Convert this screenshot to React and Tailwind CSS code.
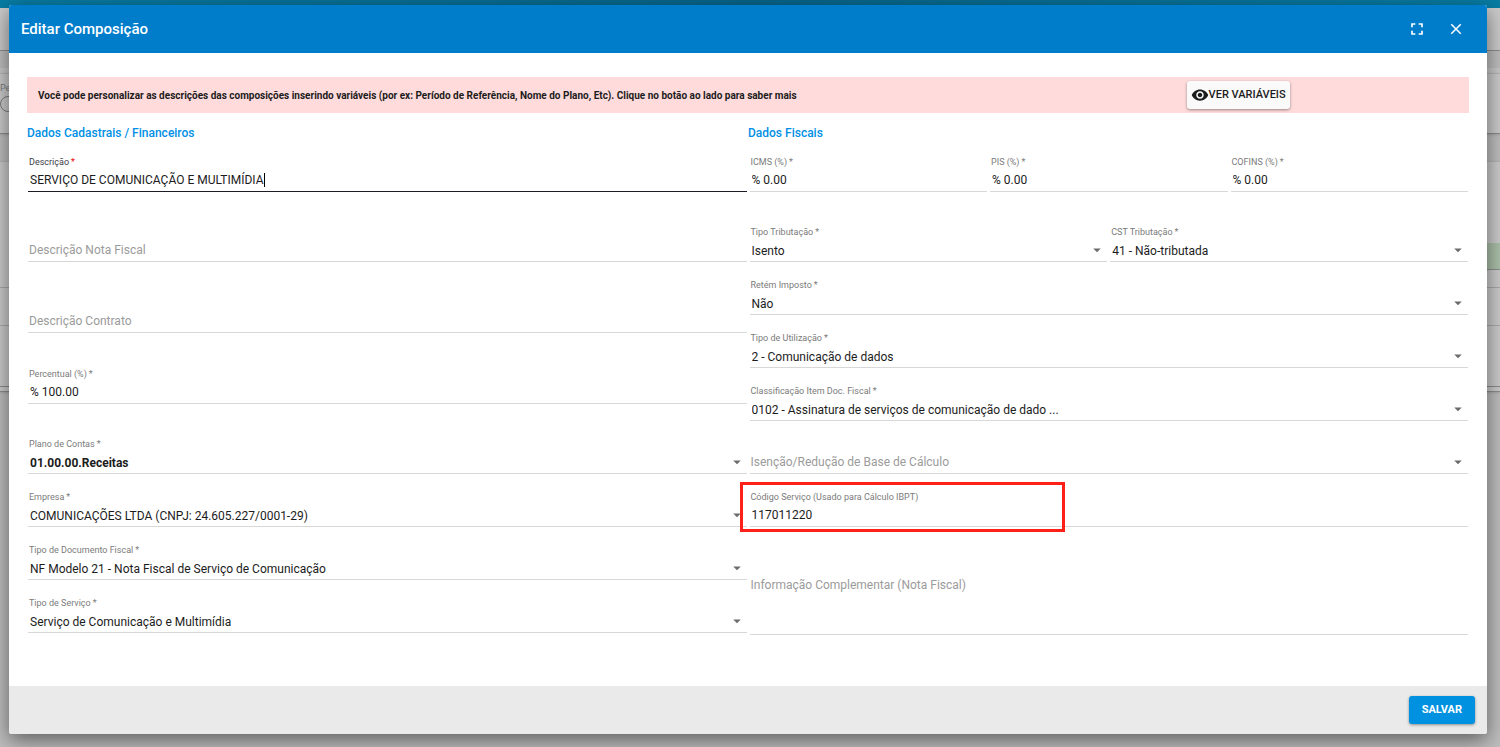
import React from 'react';
import { MdArrowDropDown, MdClose, MdFullscreen, MdVisibility } from 'react-icons/md';

const Label = ({ id, children, required, focused }) => (
  <label
    htmlFor={id}
    className={`mb-px block h-3 truncate pl-px text-[9px] leading-3 ${focused ? 'text-[#3c3c46]' : 'text-[#7b7b7b]'}`}
  >
    {children}
    {required && <span className={`ml-[2px] ${focused ? 'text-[#f00000]' : ''}`}>*</span>}
  </label>
);

// Label resting inside an empty control
const RestingLabel = ({ id, children }) => (
  <label
    htmlFor={id}
    className="pointer-events-none absolute left-px top-[13px] text-[12px] leading-[22px] text-[#9b9b9b]"
  >
    {children}
  </label>
);

const controlClass =
  'block h-[23px] w-full appearance-none rounded-none border-b border-[#d8d8d8] bg-transparent pl-[2px] text-[12px] text-[#1c1c1c] outline-none';

const TextField = ({ id, label, value, required, children }) => (
  <div className="relative flex h-9 min-w-0 flex-col justify-end">
    {value ? (
      <Label id={id} required={required}>{label}</Label>
    ) : (
      <RestingLabel id={id}>{label}</RestingLabel>
    )}
    <input id={id} type="text" defaultValue={value} className={`${controlClass} leading-[22px]`} />
    {children}
  </div>
);

const SelectField = ({ id, label, value = '', required, bold }) => (
  <div className="relative flex h-9 min-w-0 flex-col justify-end">
    {value ? (
      <Label id={id} required={required}>{label}</Label>
    ) : (
      <RestingLabel id={id}>{label}</RestingLabel>
    )}
    <select id={id} defaultValue={value} className={`${controlClass} pr-6 pt-[2px] leading-5 ${bold ? 'font-bold' : ''}`}>
      <option value={value}>{value}</option>
    </select>
    <MdArrowDropDown size={18} className="pointer-events-none absolute bottom-[3px] right-px text-[#6b6b6b]" />
  </div>
);

// Page that stays dimmed behind the dialog
const PageBehind = () => (
  <div className="absolute inset-0 overflow-hidden bg-[#bdbdbd]" aria-hidden="true">
    <div className="h-2 bg-linear-to-r from-[#087ca3] via-[#086488] to-[#087ca3]" />
    <div className="h-[43px] border-b border-[#8c8c8c] bg-[#cacaca]" />
    <div className="mt-[17px] h-[5px] bg-[#c8c8c8]" />
    <div className="h-[61px] border-y border-t-[#b4b4b4] border-b-[#8c8c8c] bg-[#cacaca] pt-2 shadow">
      <div className="text-[9px] leading-3 text-[#7a7a7a]">Período</div>
      <div className="mt-[2px] size-4 rounded-full border border-[#7a7a7a]" />
    </div>
    <div className="mt-[27px] flex h-[226px] flex-col border-y border-t-[#b4b4b4] border-b-[#8c8c8c] bg-[#cacaca] shadow">
      <div className="mt-[81px] flex h-[27px] justify-end">
        <div className="w-1/2 border-b border-[#8c8c8c] bg-[#abbfa8]" />
      </div>
      <div className="h-[18px] border-b border-[#a9a9a9]" />
      <div className="h-[38px] border-b border-[#a9a9a9]" />
    </div>
    <div className="h-[5px] border-b border-[#8c8c8c] bg-[#cacaca] shadow" />
  </div>
);

export default function App() {
  return (
    <div className="relative flex min-h-screen bg-[#bdbdbd] font-[Roboto,sans-serif]">
      <PageBehind />

      <div
        role="dialog"
        aria-labelledby="titulo"
        className="relative mb-[13px] ml-[9px] mr-[13px] mt-[5px] flex min-w-0 flex-1 flex-col overflow-hidden rounded-[3px] bg-white shadow-[0_6px_20px_rgba(0,0,0,0.5)]"
      >
        <header className="flex h-12 items-center justify-between bg-[#007dca] pl-3 pr-[22px] text-white">
          <h1 id="titulo" className="text-[15px] font-medium">Editar Composição</h1>
          <div className="flex items-center gap-5">
            <button type="button" aria-label="Tela cheia">
              <MdFullscreen size={20} />
            </button>
            <button type="button" aria-label="Fechar">
              <MdClose size={18} />
            </button>
          </div>
        </header>

        <main className="flex-1 px-[18px] pt-6">
          <div className="flex h-9 items-center bg-[#ffdbdb]">
            <p className="w-4/5 pl-[11px] text-[10px] font-bold text-[#1c1c1c]">
              Você pode personalizar as descrições das composições inserindo variáveis (por ex: Período de Referência, Nome do Plano, Etc). Clique no botão ao lado para saber mais
            </p>
            <div className="w-1/5 pl-[6px]">
              <button
                type="button"
                className="flex h-7 items-center whitespace-nowrap rounded-[3px] bg-[#fafafa] px-1 text-[11px] font-medium text-[#1c1c1c] shadow-[0_1px_3px_rgba(0,0,0,0.4)]"
              >
                <MdVisibility size={18} />
                VER VARIÁVEIS
              </button>
            </div>
          </div>

          <div className="grid grid-cols-2 text-[12px] font-medium leading-10 text-[#008fe5]">
            <h2>Dados Cadastrais / Financeiros</h2>
            <h2>Dados Fiscais</h2>
          </div>

          <form className="grid grid-cols-2 gap-[3px] px-px pt-[3px]">
            {/* Dados cadastrais */}
            <div className="flex min-w-0 flex-col gap-[34px]">
              <div className="flex h-9 flex-col justify-end">
                <Label id="descricao" required focused>Descrição</Label>
                <div className="flex h-[23px] items-center border-b border-[#1c1c28] pl-[2px]">
                  <input
                    id="descricao"
                    type="text"
                    defaultValue="SERVIÇO DE COMUNICAÇÃO E MULTIMÍDIA"
                    className="field-sizing-content h-[22px] bg-transparent text-[12px] leading-[22px] text-[#1c1c1c] outline-none"
                  />
                  <span className="h-[14px] w-px bg-black" />
                </div>
              </div>
              <div className="flex flex-col gap-[35px]">
                <TextField id="descricao-nota" label="Descrição Nota Fiscal" />
                <TextField id="descricao-contrato" label="Descrição Contrato" />
                <TextField id="percentual" label="Percentual (%)" value="% 100.00" required />
              </div>
              <div className="flex flex-col gap-[17px]">
                <SelectField id="plano" label="Plano de Contas" value="01.00.00.Receitas" required bold />
                <SelectField id="empresa" label="Empresa" value="COMUNICAÇÕES LTDA (CNPJ: 24.605.227/0001-29)" required />
                <SelectField id="documento" label="Tipo de Documento Fiscal" value="NF Modelo 21 - Nota Fiscal de Serviço de Comunicação" required />
                <SelectField id="servico" label="Tipo de Serviço" value="Serviço de Comunicação e Multimídia" required />
              </div>
            </div>

            {/* Dados fiscais */}
            <div className="flex min-w-0 flex-col gap-[34px]">
              <div className="grid grid-cols-3 gap-[3px]">
                <TextField id="icms" label="ICMS (%)" value="% 0.00" required />
                <TextField id="pis" label="PIS (%)" value="% 0.00" required />
                <TextField id="cofins" label="COFINS (%)" value="% 0.00" required />
              </div>
              <div className="flex flex-col gap-[17px]">
                <div className="grid grid-cols-2 gap-[3px]">
                  <SelectField id="tributacao" label="Tipo Tributação" value="Isento" required />
                  <SelectField id="cst" label="CST Tributação" value="41 - Não-tributada" required />
                </div>
                <SelectField id="retem" label="Retém Imposto" value="Não" required />
                <SelectField id="utilizacao" label="Tipo de Utilização" value="2 - Comunicação de dados" required />
                <SelectField
                  id="classificacao"
                  label="Classificação Item Doc. Fiscal"
                  value="0102 - Assinatura de serviços de comunicação de dado ..."
                  required
                />
                <SelectField id="isencao" label="Isenção/Redução de Base de Cálculo" />
                <TextField id="codigo" label="Código Serviço (Usado para Cálculo IBPT)" value="117011220">
                  <span className="pointer-events-none absolute -left-[10px] -top-[9px] h-[50px] w-[325px] border-3 border-[#ff2018]" />
                </TextField>
              </div>
              <div className="relative pt-[13px]">
                <RestingLabel id="informacao">Informação Complementar (Nota Fiscal)</RestingLabel>
                <textarea
                  id="informacao"
                  className="block h-[61px] w-full resize-none border-b border-[#d8d8d8] pl-[2px] text-[12px] leading-[22px] outline-none"
                />
              </div>
            </div>
          </form>
        </main>

        <footer className="flex h-12 items-center justify-end bg-[#eaeaea] px-3">
          <button
            type="button"
            className="h-7 rounded-[3px] bg-[#0091e0] px-[13px] text-[11px] font-bold text-white shadow-[0_1px_3px_rgba(0,0,0,0.4)]"
          >
            SALVAR
          </button>
        </footer>
      </div>
    </div>
  );
}
